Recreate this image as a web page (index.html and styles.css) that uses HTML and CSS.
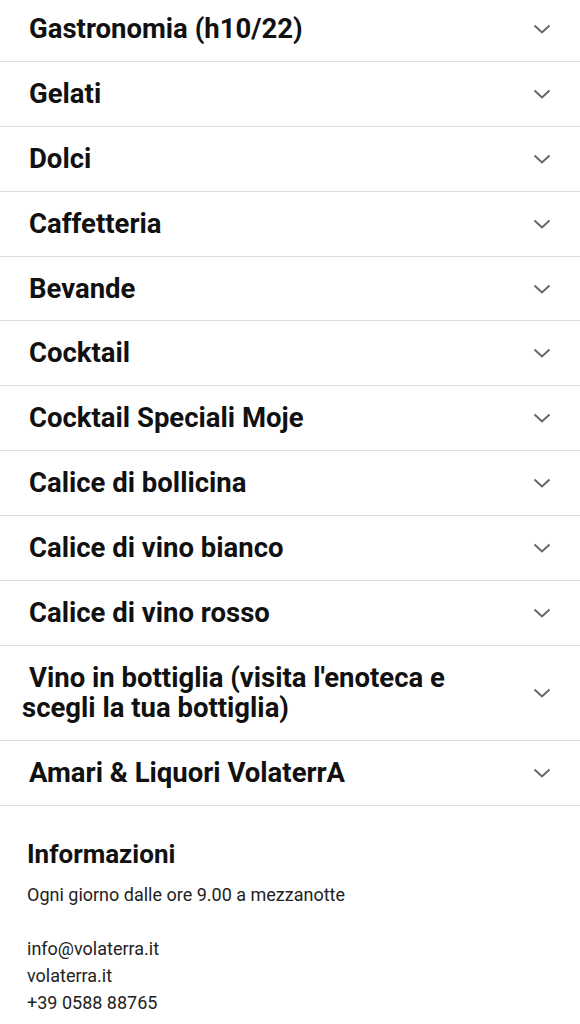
FILE: index.html
```html
<!DOCTYPE html>
<html lang="it">
<head>
    <meta charset="UTF-8">
    <meta name="viewport" content="width=device-width, initial-scale=1.0">
    <title>Menu VolaterrA</title>
    <link rel="stylesheet" href="styles.css">
</head>
<body>
    <div class="menu">
        <div class="category">
            <span class="title">Gastronomia (h10/22)</span>
            <svg class="chevron" viewBox="0 0 18 10"><polyline points="1.5,1.5 9,8.5 16.5,1.5"/></svg>
        </div>
        <div class="category">
            <span class="title">Gelati</span>
            <svg class="chevron" viewBox="0 0 18 10"><polyline points="1.5,1.5 9,8.5 16.5,1.5"/></svg>
        </div>
        <div class="category">
            <span class="title">Dolci</span>
            <svg class="chevron" viewBox="0 0 18 10"><polyline points="1.5,1.5 9,8.5 16.5,1.5"/></svg>
        </div>
        <div class="category">
            <span class="title">Caffetteria</span>
            <svg class="chevron" viewBox="0 0 18 10"><polyline points="1.5,1.5 9,8.5 16.5,1.5"/></svg>
        </div>
        <div class="category">
            <span class="title">Bevande</span>
            <svg class="chevron" viewBox="0 0 18 10"><polyline points="1.5,1.5 9,8.5 16.5,1.5"/></svg>
        </div>
        <div class="category">
            <span class="title">Cocktail</span>
            <svg class="chevron" viewBox="0 0 18 10"><polyline points="1.5,1.5 9,8.5 16.5,1.5"/></svg>
        </div>
        <div class="category">
            <span class="title">Cocktail Speciali Moje</span>
            <svg class="chevron" viewBox="0 0 18 10"><polyline points="1.5,1.5 9,8.5 16.5,1.5"/></svg>
        </div>
        <div class="category">
            <span class="title">Calice di bollicina</span>
            <svg class="chevron" viewBox="0 0 18 10"><polyline points="1.5,1.5 9,8.5 16.5,1.5"/></svg>
        </div>
        <div class="category">
            <span class="title">Calice di vino bianco</span>
            <svg class="chevron" viewBox="0 0 18 10"><polyline points="1.5,1.5 9,8.5 16.5,1.5"/></svg>
        </div>
        <div class="category">
            <span class="title">Calice di vino rosso</span>
            <svg class="chevron" viewBox="0 0 18 10"><polyline points="1.5,1.5 9,8.5 16.5,1.5"/></svg>
        </div>
        <div class="category">
            <span class="title">Vino in bottiglia (visita l'enoteca e scegli la tua bottiglia)</span>
            <svg class="chevron" viewBox="0 0 18 10"><polyline points="1.5,1.5 9,8.5 16.5,1.5"/></svg>
        </div>
        <div class="category">
            <span class="title">Amari &amp; Liquori VolaterrA</span>
            <svg class="chevron" viewBox="0 0 18 10"><polyline points="1.5,1.5 9,8.5 16.5,1.5"/></svg>
        </div>
    </div>

    <div class="info">
        <h2>Informazioni</h2>
        <p>Ogni giorno dalle ore 9.00 a mezzanotte<br><br>info@volaterra.it<br>volaterra.it<br>+39 0588 88765</p>
    </div>
</body>
</html>
```

FILE: styles.css
```css
body {
    margin: 0;
    background: #fff;
    font-family: Roboto, "Noto Sans", sans-serif;
    color: #111;
}
.menu {
    margin-top: -3px;
}
.category {
    display: flex;
    align-items: center;
    justify-content: space-between;
    gap: 60px;
    padding: 17px 29px 16.9px 22px;
    border-bottom: 1px solid #dcdcdc;
}
.title {
    font-size: 27.5px;
    font-weight: 700;
    line-height: 30px;
    text-indent: 7px;
    color: #111;
}
.chevron {
    flex: none;
    width: 18px;
    height: 10px;
    fill: none;
    stroke: #666;
    stroke-width: 2;
}
.info {
    padding: 32px 27px 10px;
}
.info h2 {
    margin: 0 0 11px;
    font-size: 26px;
    font-weight: 700;
    line-height: 32px;
    color: #111;
}
.info p {
    margin: 0;
    font-size: 18px;
    line-height: 27px;
    color: #222;
}
```
